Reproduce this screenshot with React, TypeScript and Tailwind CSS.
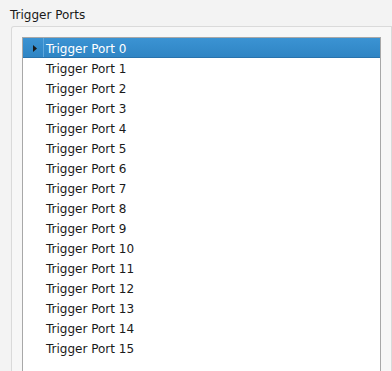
import React from 'react';

const PORTS = Array.from({ length: 16 }, (_, i) => `Trigger Port ${i}`);

export default function App() {
  return (
    <div
      className="w-[392px] h-[371px] overflow-hidden bg-[#f3f3f3] text-[12px] text-[#1a1a1a]"
      style={{ fontFamily: '"DejaVu Sans", sans-serif' }}
    >
      <div className="pl-[10px] pt-[8px] h-[26px] leading-[15px]">Trigger Ports</div>
      <div className="ml-[11px] h-[400px] rounded-tl-[3px] border-l border-t border-r border-[#dadada] bg-[#f7f7f7] pl-[10px] pr-[10px] pt-[10px]">
        <div className="h-[400px] border border-[#a8a8a8] bg-white">
          {PORTS.map((name, i) =>
            i === 0 ? (
              <div
                key={name}
                className="flex h-[20px] items-stretch border-b border-[#2873ad] bg-gradient-to-b from-[#3b93d3] to-[#2f85c4] text-white"
              >
                <div className="flex w-[20px] items-center justify-center pl-[4px] pt-[1px]">
                  <svg width="5" height="7" viewBox="0 0 5 7">
                    <path d="M0 0 L4 3.5 L0 7 Z" fill="#1a1a1a" />
                  </svg>
                </div>
                <div className="w-[1px] bg-[#5fa7dc]" />
                <span className="flex items-center pl-[2px] pt-[3px]">{name}</span>
              </div>
            ) : (
              <div key={name} className="flex h-[20px] items-center pl-[23px] pt-[2px]">
                {name}
              </div>
            )
          )}
        </div>
      </div>
    </div>
  );
}
